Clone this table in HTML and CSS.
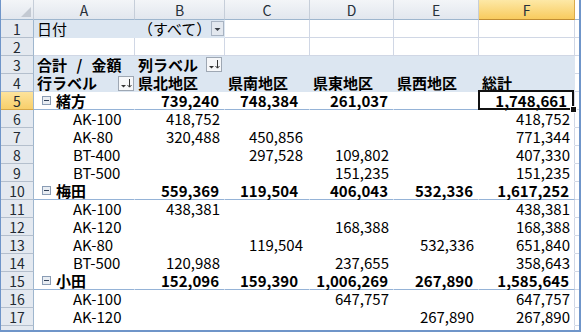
FILE: index.html
```html
<!DOCTYPE html>
<html lang="ja">
<head>
<meta charset="utf-8">
<title>Pivot</title>
<link rel="stylesheet" href="styles.css">
</head>
<body>
<div class="frame">
<div class="sheet">
  <!-- header -->
  <div class="ch corner"><svg width="10" height="10" viewBox="0 0 10 10"><path d="M10 0V10H0z" fill="#c3c9d2"/></svg></div>
  <div class="ch">A</div><div class="ch">B</div><div class="ch">C</div><div class="ch">D</div><div class="ch">E</div><div class="ch sel">F</div><div class="ch g"></div>

  <!-- 1 -->
  <div class="rh">1</div>
  <div class="hd t">日付</div>
  <div class="hd t b1">（すべて）<span class="dd"><svg width="13" height="15" viewBox="0 0 13 15"><rect x="0.5" y="0.5" width="12" height="14" fill="#e3e8ef" stroke="#a8b3c2"/><path d="M3.5 7h6l-3 3z" fill="#3a3f46"/></svg></span></div>
  <div class="c"></div><div class="c"></div><div class="c"></div><div class="c"></div><div class="g"></div>

  <!-- 2 -->
  <div class="rh">2</div>
  <div class="c"></div><div class="c"></div><div class="c"></div><div class="c"></div><div class="c"></div><div class="c"></div><div class="g"></div>

  <!-- 3 -->
  <div class="rh">3</div>
  <div class="hd t bold sum">合計 / 金額</div>
  <div class="hd t bold b3">列ラベル<span class="sb"><svg width="16" height="15" viewBox="0 0 16 15"><rect x="0.5" y="0.5" width="15" height="14" fill="#f6f7f9" stroke="#9ea7b3"/><path d="M3 9h5l-2.5 2.5z" fill="#333"/><path d="M11.5 3v8" stroke="#333"/><path d="M9.5 9l2 2.2 2-2.2" fill="none" stroke="#333"/></svg></span></div>
  <div class="hd"></div><div class="hd"></div><div class="hd"></div><div class="hd"></div><div class="g"></div>

  <!-- 4 -->
  <div class="rh">4</div>
  <div class="hd t bold a4">行ラベル<span class="sb"><svg width="16" height="15" viewBox="0 0 16 15"><rect x="0.5" y="0.5" width="15" height="14" fill="#f6f7f9" stroke="#9ea7b3"/><path d="M3 9h5l-2.5 2.5z" fill="#333"/><path d="M11.5 3v8" stroke="#333"/><path d="M9.5 9l2 2.2 2-2.2" fill="none" stroke="#333"/></svg></span></div>
  <div class="hd t bold">県北地区</div><div class="hd t bold">県南地区</div><div class="hd t bold">県東地区</div><div class="hd t bold">県西地区</div><div class="hd t bold">総計</div><div class="g"></div>

  <!-- 5 -->
  <div class="rh sel">5</div>
  <div class="st grp"><svg class="tog" width="9" height="9" viewBox="0 0 9 9"><rect x="0.5" y="0.5" width="8" height="8" fill="#e8edf3" stroke="#8a9cb4"/><path d="M2 4.5h5" stroke="#2f3f57"/></svg>緒方</div>
  <div class="st n">739,240</div><div class="st n nc">748,384</div><div class="st n">261,037</div><div class="st n"></div><div class="st n r cur">1,748,661</div><div class="g"></div>

  <!-- 6 -->
  <div class="rh">6</div>
  <div class="b it">AK-100</div>
  <div class="b n">418,752</div><div class="b n nc"></div><div class="b n"></div><div class="b n"></div><div class="b n r">418,752</div><div class="g"></div>

  <!-- 7 -->
  <div class="rh">7</div>
  <div class="b it">AK-80</div>
  <div class="b n">320,488</div><div class="b n nc">450,856</div><div class="b n"></div><div class="b n"></div><div class="b n r">771,344</div><div class="g"></div>

  <!-- 8 -->
  <div class="rh">8</div>
  <div class="b it">BT-400</div>
  <div class="b n"></div><div class="b n nc">297,528</div><div class="b n">109,802</div><div class="b n"></div><div class="b n r">407,330</div><div class="g"></div>

  <!-- 9 -->
  <div class="rh">9</div>
  <div class="b it">BT-500</div>
  <div class="b n"></div><div class="b n nc"></div><div class="b n">151,235</div><div class="b n"></div><div class="b n r">151,235</div><div class="g"></div>

  <!-- 10 -->
  <div class="rh">10</div>
  <div class="st grp"><svg class="tog" width="9" height="9" viewBox="0 0 9 9"><rect x="0.5" y="0.5" width="8" height="8" fill="#e8edf3" stroke="#8a9cb4"/><path d="M2 4.5h5" stroke="#2f3f57"/></svg>梅田</div>
  <div class="st n">559,369</div><div class="st n nc">119,504</div><div class="st n">406,043</div><div class="st n">532,336</div><div class="st n r">1,617,252</div><div class="g"></div>

  <!-- 11 -->
  <div class="rh">11</div>
  <div class="b it">AK-100</div>
  <div class="b n">438,381</div><div class="b n nc"></div><div class="b n"></div><div class="b n"></div><div class="b n r">438,381</div><div class="g"></div>

  <!-- 12 -->
  <div class="rh">12</div>
  <div class="b it">AK-120</div>
  <div class="b n"></div><div class="b n nc"></div><div class="b n">168,388</div><div class="b n"></div><div class="b n r">168,388</div><div class="g"></div>

  <!-- 13 -->
  <div class="rh">13</div>
  <div class="b it">AK-80</div>
  <div class="b n"></div><div class="b n nc">119,504</div><div class="b n"></div><div class="b n">532,336</div><div class="b n r">651,840</div><div class="g"></div>

  <!-- 14 -->
  <div class="rh">14</div>
  <div class="b it">BT-500</div>
  <div class="b n">120,988</div><div class="b n nc"></div><div class="b n">237,655</div><div class="b n"></div><div class="b n r">358,643</div><div class="g"></div>

  <!-- 15 -->
  <div class="rh">15</div>
  <div class="st grp"><svg class="tog" width="9" height="9" viewBox="0 0 9 9"><rect x="0.5" y="0.5" width="8" height="8" fill="#e8edf3" stroke="#8a9cb4"/><path d="M2 4.5h5" stroke="#2f3f57"/></svg>小田</div>
  <div class="st n">152,096</div><div class="st n nc">159,390</div><div class="st n">1,006,269</div><div class="st n">267,890</div><div class="st n r">1,585,645</div><div class="g"></div>

  <!-- 16 -->
  <div class="rh">16</div>
  <div class="b it">AK-100</div>
  <div class="b n"></div><div class="b n nc"></div><div class="b n">647,757</div><div class="b n"></div><div class="b n r">647,757</div><div class="g"></div>

  <!-- 17 -->
  <div class="rh">17</div>
  <div class="b it">AK-120</div>
  <div class="b n"></div><div class="b n nc"></div><div class="b n"></div><div class="b n">267,890</div><div class="b n r">267,890</div><div class="g"></div>

  <!-- 18 -->
  <div class="rh"></div>
  <div class="b"></div><div class="b"></div><div class="b"></div><div class="b"></div><div class="b"></div><div class="b r"></div><div class="g"></div>
</div>
</div>
</body>
</html>
```
FILE: styles.css
```css
* { box-sizing: border-box; margin: 0; padding: 0; }

html, body {
  width: 581px;
  height: 332px;
  overflow: hidden;
  background: #ffffff;
}

body {
  font-family: "Noto Sans CJK JP", "Noto Sans", sans-serif;
  font-size: 14px;
  color: #000;
}

.frame {
  width: 581px;
  height: 332px;
  border-left: 1px solid #6f95c9;
  border-right: 2px solid #6f95c9;
  border-bottom: 2px solid #6f95c9;
  overflow: hidden;
  background: #fff;
}

.sheet {
  display: grid;
  grid-template-columns: 33px 101px 90px 85px 84px 85px 96px 4px;
  grid-template-rows: 20px;
  grid-auto-rows: 18px;
}

.sheet > div {
  display: flex;
  align-items: center;
  white-space: nowrap;
  line-height: 1;
  border-right: 1px solid #d0d7e5;
  border-bottom: 1px solid #d0d7e5;
}

/* column headers */
.ch {
  justify-content: center;
  background: linear-gradient(#f3f5f8, #e2e7ee);
  border-right-color: #c6ced9 !important;
  border-bottom-color: #9eb6ce !important;
  color: #27303a;
  font-size: 14px;
}
.ch.sel {
  background: linear-gradient(#fde8a6, #f8cb5e);
  border-right-color: #d9aa4a !important;
  border-bottom-color: #c08d33 !important;
}
.corner {
  justify-content: flex-end;
  align-items: flex-end !important;
  padding: 0 2px 2px 0;
}

/* row headers */
.rh {
  justify-content: center;
  background: #e4e9f0;
  border-right-color: #9eb6ce !important;
  border-bottom-color: #b4bfcd !important;
  color: #222a33;
  font-size: 14px;
}
.rh.sel {
  background: linear-gradient(#fde39c, #f8cf6a);
  border-bottom-color: #d6a748 !important;
}

/* plain cells */
.c { background: #fff; }
.g {
  background: #fff;
  border-right: 0 !important;
}

/* pivot header fill */
.hd {
  background: #dce6f1;
  border-right-color: #dce6f1 !important;
  border-bottom-color: #dce6f1 !important;
}
.t { padding-left: 3px; font-size: 15px; }
.bold { font-weight: 700; }
.sum { word-spacing: 6px; }

.b1 { padding-right: 1px; }
.b3 { padding-right: 1px; }
.a4 { padding-right: 0; }

.dd, .sb {
  margin-left: auto;
  display: flex;
}
.b3 .sb { margin-right: 1px; }
.a4 .sb { margin-top: 1px; }

/* pivot body */
.b {
  background: #fff;
  border-right-color: #fff !important;
  border-bottom-color: #fff !important;
}
.st {
  background: #fff;
  font-weight: 700;
  border-right-color: #fff !important;
  border-bottom-color: #95b3d7 !important;
}
.r { border-right-color: #d0d7e5 !important; }

.it {
  padding-left: 39px;
  font-size: 15px;
}
.grp {
  padding-left: 8px;
  font-size: 15px;
}
.tog { margin-right: 5px; flex: none; }

.n {
  justify-content: flex-end;
  padding-right: 4px;
  font-size: 15px;
}
.nc { padding-right: 6px; }
.st.n { padding-right: 5px; }
.st.nc { padding-right: 11px; }

/* active cell */
.cur { position: relative; padding-right: 7px !important; }
.cur::after {
  content: "";
  position: absolute;
  left: -1px;
  top: -2px;
  right: 0;
  bottom: -1px;
  border: 2px solid #111;
  pointer-events: none;
}
.cur::before {
  content: "";
  position: absolute;
  right: -3px;
  bottom: -4px;
  width: 5px;
  height: 5px;
  background: #111;
  border: 1px solid #fff;
  z-index: 2;
}
```
